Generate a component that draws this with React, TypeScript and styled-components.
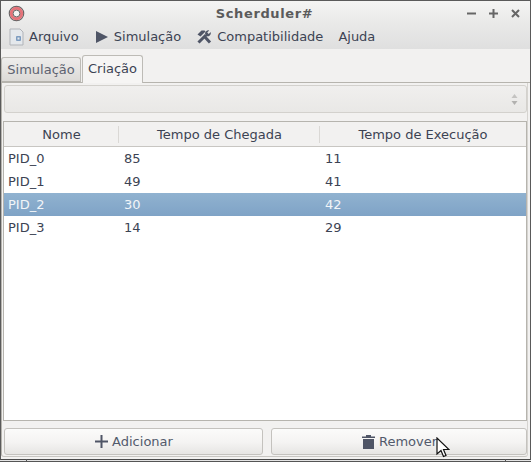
import React from "react";
import styled, { createGlobalStyle } from "styled-components";

const GlobalStyle = createGlobalStyle`
  html, body {
    margin: 0;
    padding: 0;
    background: #e4e4e4;
  }
  * {
    box-sizing: border-box;
  }
`;

const Frame = styled.div`
  position: relative;
  width: 531px;
  height: 462px;
  overflow: hidden;
  font-family: "DejaVu Sans", sans-serif;
  font-size: 13px;
  color: #3c4353;
  border-bottom: 1px solid #555;
  &::before,
  &::after {
    content: "";
    position: absolute;
    top: 459px;
    width: 1px;
    height: 2px;
    background: #555;
  }
  &::before {
    left: 26px;
  }
  &::after {
    left: 505px;
  }
`;

const Window = styled.div`
  display: flex;
  flex-direction: column;
  width: 531px;
  height: 460px;
  background: #f2f1f0;
  border: 1px solid #5a5a5a;
  border-bottom: 1px solid #4a4a4a;
`;

const TitleBar = styled.div`
  display: grid;
  grid-template-columns: 1fr auto 1fr;
  align-items: center;
  height: 23px;
  padding: 1px 10px 0 7px;
  background: linear-gradient(#f4f4f3, #e9e9e8);
`;

const TitleText = styled.div`
  font-weight: 700;
  font-size: 13px;
  letter-spacing: 0.6px;
  color: #5b5b5b;
  padding-left: 1px;
`;

const WindowButtons = styled.div`
  display: flex;
  gap: 13px;
  align-items: center;
  justify-content: flex-end;
`;

const MenuBar = styled.div`
  display: flex;
  align-items: center;
  height: 25px;
  padding-left: 8px;
  background: linear-gradient(#e9e9e8, #dfdfdf);
`;

const MenuItem = styled.div<{ $gap: number; $iconGap?: number }>`
  display: flex;
  align-items: center;
  gap: ${(p) => p.$iconGap ?? 4}px;
  margin-right: ${(p) => p.$gap}px;
  white-space: nowrap;
`;

const TabStrip = styled.div`
  display: flex;
  align-items: flex-end;
  height: 34px;
  border-bottom: 1px solid #b6b4ae;
`;

const Tab = styled.div<{ $active?: boolean }>`
  display: flex;
  align-items: center;
  justify-content: center;
  height: ${(p) => (p.$active ? 28 : 25)}px;
  width: ${(p) => (p.$active ? 61 : 80)}px;
  margin-right: ${(p) => (p.$active ? 0 : 1)}px;
  margin-bottom: ${(p) => (p.$active ? -1 : 0)}px;
  padding-bottom: ${(p) => (p.$active ? 2 : 0)}px;
  border: 1px solid #bdbbb6;
  border-bottom: ${(p) => (p.$active ? "none" : "1px solid #b6b4ae")};
  border-radius: 3px 3px 0 0;
  background: ${(p) => (p.$active ? "#f6f5f4" : "linear-gradient(#eeedec, #dcdad7)")};
  color: ${(p) => (p.$active ? "#3c4353" : "#5d6270")};
  z-index: 1;
`;

const Body = styled.div`
  flex: 1;
  display: flex;
  flex-direction: column;
  min-height: 0;
  margin: 0 2px 2px 0;
  padding: 2px 0 0 1px;
  border-left: 1px solid #b6b4ae;
  border-right: 1px solid #d6d4d0;
  border-bottom: 1px solid #c8c6c2;
  border-radius: 0 0 3px 3px;
`;

const Combo = styled.div`
  display: flex;
  align-items: center;
  justify-content: flex-end;
  height: 28px;
  margin: 0 0 8px 1px;
  padding-right: 8px;
  border: 1px solid #d3d1cd;
  border-radius: 3px;
  background: linear-gradient(#f0efee, #e9e8e6);
`;

const Table = styled.div`
  flex: 1;
  display: flex;
  flex-direction: column;
  min-height: 0;
  border: 1px solid #b6b4ae;
  background: #fff;
`;

const HeaderRow = styled.div`
  display: grid;
  grid-template-columns: 115px 201px 1fr;
  height: 25px;
  background: #f2f1f0;
  border-bottom: 1px solid #c8c6c2;
`;

const HeaderCell = styled.div<{ $last?: boolean }>`
  display: flex;
  align-items: center;
  justify-content: center;
  position: relative;
  padding-top: 1px;
  &::after {
    content: "";
    display: ${(p) => (p.$last ? "none" : "block")};
    position: absolute;
    right: 0;
    top: 4px;
    bottom: 3px;
    width: 1px;
    background: #dad8d5;
  }
`;

const Row = styled.div<{ $selected?: boolean }>`
  display: grid;
  grid-template-columns: 116px 201px 1fr;
  align-items: center;
  height: 23px;
  background: ${(p) => (p.$selected ? "linear-gradient(#90b2d0, #7fa3c6)" : "transparent")};
  color: ${(p) => (p.$selected ? "#f2f5f8" : "#3c4353")};
`;

const Cell = styled.div`
  padding-left: 4px;
`;

const ActionBar = styled.div`
  display: flex;
  gap: 8px;
  padding: 7px 0 1px 1px;
`;

const ActionButton = styled.div<{ $width: number }>`
  display: flex;
  align-items: center;
  justify-content: center;
  gap: 3px;
  width: ${(p) => p.$width}px;
  height: 27px;
  border: 1px solid #c4c2be;
  border-radius: 3px;
  background: linear-gradient(#fbfbfa, #f4f3f2 55%, #e6e5e3);
  color: #525a6c;
`;

const Cursor = styled.svg`
  position: absolute;
  left: 436px;
  top: 437px;
`;

const rows = [
  { name: "PID_0", arrival: 85, exec: 11 },
  { name: "PID_1", arrival: 49, exec: 41 },
  { name: "PID_2", arrival: 30, exec: 42 },
  { name: "PID_3", arrival: 14, exec: 29 },
];

const AppIcon = () => (
  <svg width="17" height="17" viewBox="0 0 17 17">
    <circle cx="8.5" cy="8.5" r="7.2" fill="#f0f0f0" stroke="#666" strokeWidth="1.2" />
    <circle cx="8.5" cy="8.5" r="5.2" fill="none" stroke="#e5737a" strokeWidth="3" />
    <circle cx="8.5" cy="8.5" r="3.4" fill="#f4f4f3" stroke="#666" strokeWidth="1" />
  </svg>
);

const FileIcon = () => (
  <svg width="16" height="18" viewBox="0 0 16 18">
    <path d="M1 1h10l3 3v13H1z" fill="#e4e8ec" stroke="#b0b3b8" />
    <rect x="7" y="8" width="5" height="5" rx="1" fill="#7d9cc0" />
    <rect x="8.5" y="9.5" width="2" height="2" fill="#e4e8ec" />
  </svg>
);

const PlayIcon = () => (
  <svg width="14" height="14" viewBox="0 0 14 14">
    <path d="M1 1l12 6-12 6z" fill="#4f5566" />
  </svg>
);

// hammer and wrench crossed
const ToolsIcon = () => (
  <svg width="16" height="16" viewBox="0 0 16 16">
    <path d="M8 7l6 6.5" stroke="#4f5566" strokeWidth="3" fill="none" />
    <path d="M1.5 5.5L5.5 1.5h3l1 1-3.5 3.5L4.5 7.5z" fill="#4f5566" />
    <path d="M2.5 13.5L10 6" stroke="#4f5566" strokeWidth="3" fill="none" />
    <path d="M9 4.5a3.3 3.3 0 0 1 4.2-3l-2 2 1.5 1.5 2-2a3.3 3.3 0 0 1-4.5 4z" fill="#4f5566" />
  </svg>
);

const SpinnerArrows = () => (
  <svg width="7" height="13" viewBox="0 0 7 13">
    <path d="M3.5 1L6.5 5H0.5z" fill="#c4c3c1" />
    <path d="M3.5 12L6.5 8H0.5z" fill="#b2b1af" />
  </svg>
);

const PlusIcon = () => (
  <svg width="15" height="15" viewBox="0 0 15 15">
    <path d="M6.5 1h2v5.5H14v2H8.5V14h-2V8.5H1v-2h5.5z" fill="#4f5566" />
  </svg>
);

const TrashIcon = () => (
  <svg width="15" height="16" viewBox="0 0 15 16">
    <path d="M1 2.500h4V1h5v1.500h4V4H1z" fill="#4f5566" />
    <path d="M2 5h11v10H2z" fill="#4f5566" />
  </svg>
);

const App = () => {
  return (
    <Frame>
      <GlobalStyle />
      <Window>
        <TitleBar>
          <AppIcon />
          <TitleText>Scherduler#</TitleText>
          <WindowButtons>
            <svg width="9" height="9" viewBox="0 0 9 9">
              <path d="M0 3.5h9v2H0z" fill="#666" />
            </svg>
            <svg width="9" height="9" viewBox="0 0 9 9">
              <path d="M3.5 0h2v3.5H9v2H5.5V9h-2V5.5H0v-2h3.5z" fill="#666" />
            </svg>
            <svg width="9" height="9" viewBox="0 0 9 9">
              <path d="M1 1l7 7M8 1l-7 7" stroke="#666" strokeWidth="2" />
            </svg>
          </WindowButtons>
        </TitleBar>
        <MenuBar>
          <MenuItem $gap={16}>
            <FileIcon />
            Arquivo
          </MenuItem>
          <MenuItem $gap={15} $iconGap={5}>
            <PlayIcon />
            Simulação
          </MenuItem>
          <MenuItem $gap={15} $iconGap={5}>
            <ToolsIcon />
            Compatibilidade
          </MenuItem>
          <MenuItem $gap={0}>Ajuda</MenuItem>
        </MenuBar>
        <TabStrip>
          <Tab>Simulação</Tab>
          <Tab $active>Criação</Tab>
        </TabStrip>
        <Body>
          <Combo>
            <SpinnerArrows />
          </Combo>
          <Table>
            <HeaderRow>
              <HeaderCell>Nome</HeaderCell>
              <HeaderCell>Tempo de Chegada</HeaderCell>
              <HeaderCell $last>Tempo de Execução</HeaderCell>
            </HeaderRow>
            {rows.map((row) => (
              <Row key={row.name} $selected={row.name === "PID_2"}>
                <Cell>{row.name}</Cell>
                <Cell>{row.arrival}</Cell>
                <Cell>{row.exec}</Cell>
              </Row>
            ))}
          </Table>
          <ActionBar>
            <ActionButton $width={259}>
              <PlusIcon />
              Adicionar
            </ActionButton>
            <ActionButton $width={256}>
              <TrashIcon />
              Remover
            </ActionButton>
          </ActionBar>
        </Body>
      </Window>
      <Cursor width="14" height="21" viewBox="0 0 14 21">
        <path d="M1 1v16l4-3.5 2.5 6 2.5-1-2.500-6H13z" fill="#fff" stroke="#111" strokeWidth="1.2" />
      </Cursor>
    </Frame>
  );
};

export default App;
